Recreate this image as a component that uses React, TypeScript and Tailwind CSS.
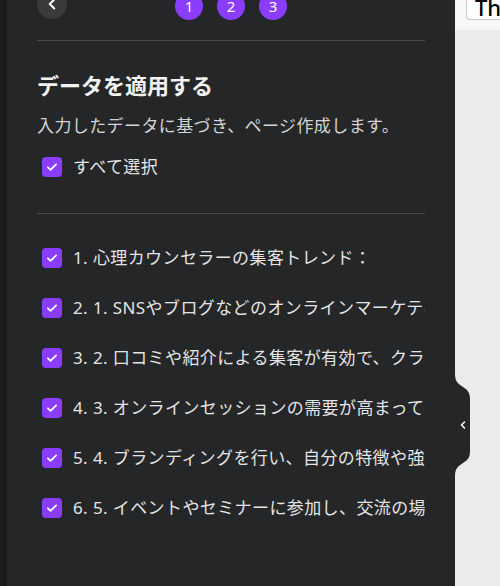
import { ChevronLeft } from "lucide-react";

const items = [
  "1. 心理カウンセラーの集客トレンド：",
  "2. 1. SNSやブログなどのオンラインマーケティングが重要",
  "3. 2. 口コミや紹介による集客が有効で、クライアントの満足度",
  "4. 3. オンラインセッションの需要が高まっている",
  "5. 4. ブランディングを行い、自分の特徴や強みを伝える",
  "6. 5. イベントやセミナーに参加し、交流の場を広げる",
];

function Check() {
  return (
    <span className="flex h-[20px] w-[20px] shrink-0 items-center justify-center rounded-[4px] bg-[#8b3dff]">
      <svg width="14" height="14" viewBox="0 0 24 24" fill="none">
        <path
          d="M5 12.5l4.5 4.5L19 7.5"
          stroke="white"
          strokeWidth="3"
          strokeLinecap="round"
          strokeLinejoin="round"
        />
      </svg>
    </span>
  );
}

export default function App() {
  return (
    <div
      className="relative flex h-[586px] w-[500px] overflow-hidden bg-[#ebebed]"
      style={{ fontFamily: '"Noto Sans", "Noto Sans CJK JP", sans-serif' }}
    >
      <div className="w-[7px] shrink-0 bg-[#1b1b1c]" />

      {/* side panel */}
      <div className="w-[448px] shrink-0 bg-[#252627] px-[30px]">
        <div className="relative -mt-[11px] flex h-[30px] items-center justify-center">
          <button className="absolute left-0 top-0 flex h-[30px] w-[30px] items-center justify-center rounded-full bg-[#3a3a3c] text-white">
            <ChevronLeft size={18} strokeWidth={2.5} />
          </button>
          <div className="mt-[4px] flex gap-[14px]">
            {[1, 2, 3].map((n) => (
              <span
                key={n}
                className="flex h-[28px] w-[28px] items-center justify-center rounded-full bg-[#8b3dff] text-[15px] text-white"
              >
                {n}
              </span>
            ))}
          </div>
        </div>

        <div className="mt-[21px] h-px bg-[#4b4b4d]" />

        <h1 className="mt-[29px] text-[22px] font-bold leading-[30px] text-[#f2f2f2]">
          データを適用する
        </h1>
        <p className="mt-[14px] text-[17px] leading-[24px] tracking-[0.4px] text-[#d4d4d6]">
          入力したデータに基づき、ページ作成します。
        </p>
        <label className="mt-[17px] flex items-center gap-[11px] pl-[5px] text-[17px] leading-[24px] tracking-[0.4px] text-[#e4e4e6]">
          <Check />
          すべて選択
        </label>

        <div className="mt-[34px] h-px bg-[#4b4b4d]" />

        <div className="mt-[32px] flex flex-col gap-[26px]">
          {items.map((t) => (
            <div key={t} className="flex items-center gap-[11px] pl-[5px]">
              <Check />
              <span className="overflow-hidden whitespace-nowrap text-[17px] leading-[24px] tracking-[0.4px] text-[#e4e4e6]">
                {t}
              </span>
            </div>
          ))}
        </div>
      </div>

      {/* right editor area */}
      <div className="flex-1">
        <div className="h-[30px] bg-[#f7f7f8] pl-[11px]">
          <div className="h-[20px] overflow-hidden rounded-bl-[4px] border-b border-l border-[#c9c9cc] bg-white pl-[8px]">
            <div className="-mt-[6px] text-[22px] font-medium leading-[26px] text-black">The</div>
          </div>
        </div>
      </div>

      {/* collapse tab */}
      <div className="absolute left-[455px] top-[373px] flex h-[104px] w-[16px] items-center">
        <svg className="absolute inset-0" width="16" height="104" viewBox="0 0 16 104">
          <path
            d="M0 0 C0 8 2 10 8 14 C13 17 15 20 15 26 L15 78 C15 84 13 87 8 90 C2 94 0 96 0 104 Z"
            fill="#252627"
          />
        </svg>
        <ChevronLeft className="relative ml-[2px] text-white" size={12} strokeWidth={3} />
      </div>
    </div>
  );
}
